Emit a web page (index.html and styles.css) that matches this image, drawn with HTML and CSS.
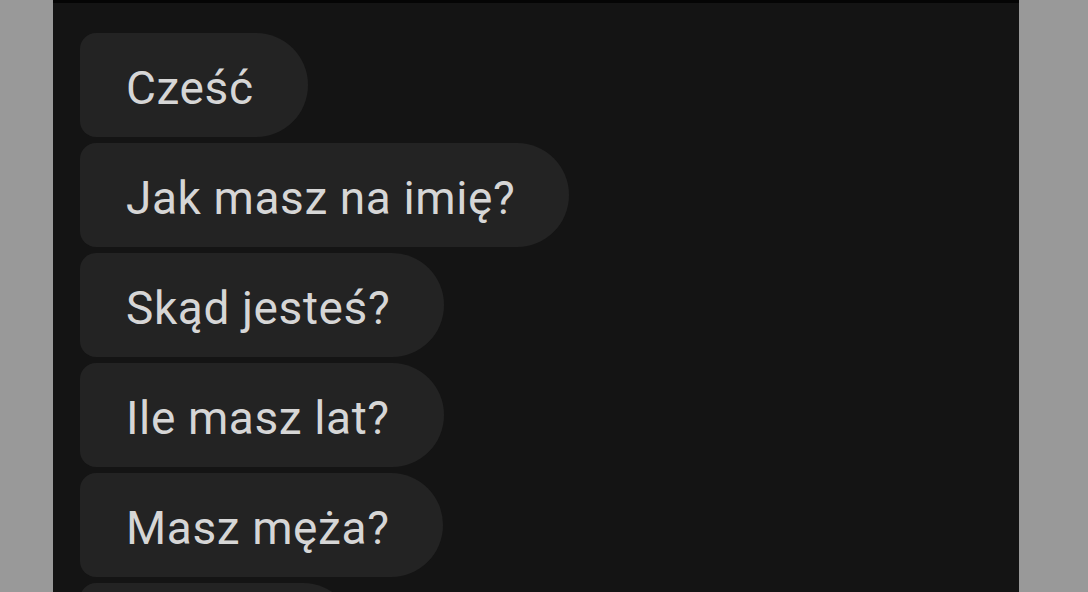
FILE: index.html
```html
<!DOCTYPE html>
<html lang="pl">
<head>
<meta charset="utf-8">
<link rel="stylesheet" href="styles.css">
</head>
<body>
<div class="frame">
  <div class="side"></div>
  <main class="chat">
    <div class="msg">Cześć</div>
    <div class="msg">Jak masz na imię?</div>
    <div class="msg">Skąd jesteś?</div>
    <div class="msg">Ile masz lat?</div>
    <div class="msg">Masz męża?</div>
    <div class="msg last">&nbsp;</div>
  </main>
  <div class="side"></div>
</div>
</body>
</html>
```
FILE: styles.css
```css
html, body {
  margin: 0;
  padding: 0;
  height: 100%;
  overflow: hidden;
  background: #9a9a9a;
}
.frame {
  display: grid;
  grid-template-columns: 53px 966px 1fr;
  height: 592px;
}
.side {
  background: #999999;
}
.chat {
  background: #141414;
  border-top: 3px solid #050505;
  padding: 30px 0 0 27px;
  display: flex;
  flex-direction: column;
  align-items: flex-start;
  gap: 6px;
  overflow: hidden;
}
.msg {
  box-sizing: border-box;
  height: 104px;
  display: flex;
  align-items: center;
  padding: 5px 54px 0 46px;
  background: #232323;
  color: #d6d6d6;
  font-family: Roboto, "Noto Sans", sans-serif;
  font-size: 46px;
  letter-spacing: 0.6px;
  border-radius: 16px 52px 52px 16px;
  white-space: nowrap;
  flex-shrink: 0;
}
.msg.last {
  width: 275px;
}
```
